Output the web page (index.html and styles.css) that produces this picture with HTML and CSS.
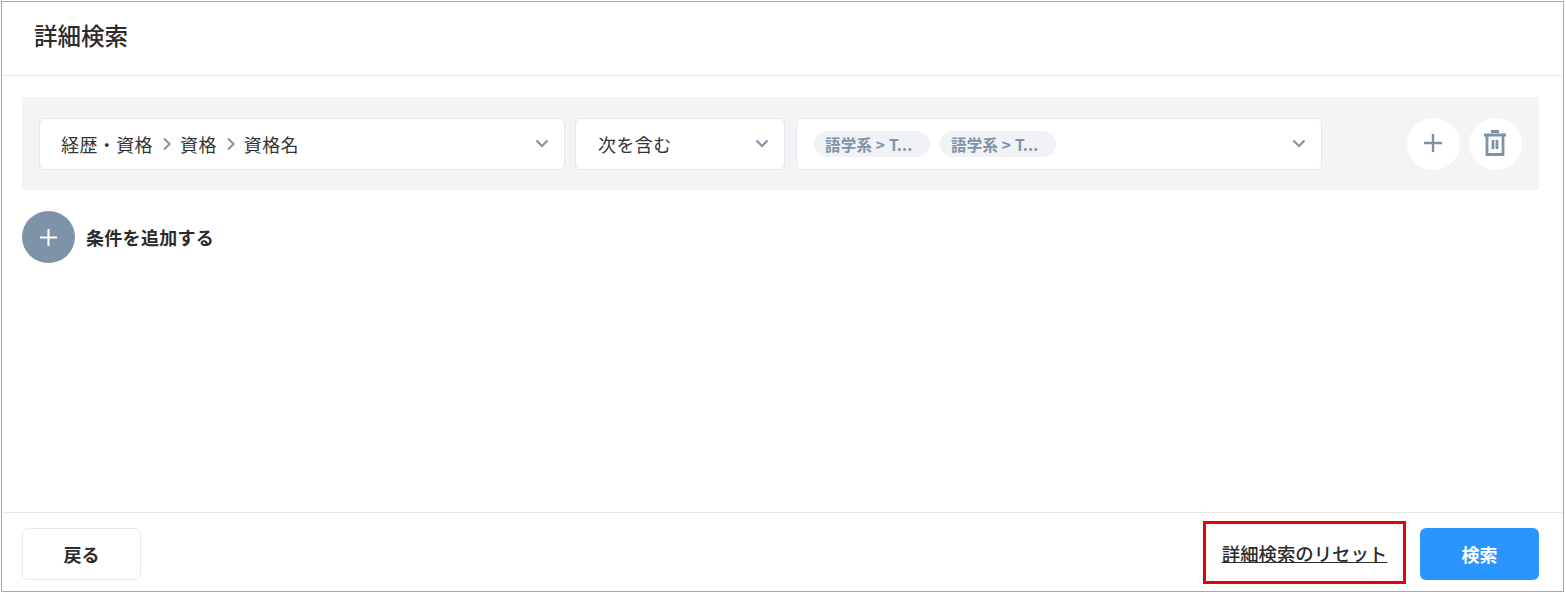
FILE: index.html
```html
<!DOCTYPE html>
<html lang="ja">
<head>
<meta charset="utf-8">
<title>詳細検索</title>
<link rel="stylesheet" href="styles.css">
</head>
<body>
<main class="frame">
  <header class="head"><h1 class="title">詳細検索</h1></header>
  <section class="body">
    <div class="row">
      <div class="select select-field">
        <span class="value">経歴・資格<svg class="sep" viewBox="0 0 10 14"><path d="M2 1.5 7.5 7 2 12.5"/></svg>資格<svg class="sep" viewBox="0 0 10 14"><path d="M2 1.5 7.5 7 2 12.5"/></svg>資格名</span>
        <svg class="chev" viewBox="0 0 14 9"><path d="M1.5 1.5 7 7l5.5-5.5"/></svg>
      </div>
      <div class="select select-op">
        <span class="value">次を含む</span>
        <svg class="chev" viewBox="0 0 14 9"><path d="M1.5 1.5 7 7l5.5-5.5"/></svg>
      </div>
      <div class="select select-val">
        <span class="chips"><span class="chip">語学系 &gt; T...</span><span class="chip">語学系 &gt; T...</span></span>
        <svg class="chev" viewBox="0 0 14 9"><path d="M1.5 1.5 7 7l5.5-5.5"/></svg>
      </div>
      <div class="actions">
        <button class="round" type="button" aria-label="追加"><svg class="ico" viewBox="0 0 20 20"><path d="M10 1v18M1 10h18"/></svg></button>
        <button class="round" type="button" aria-label="削除"><svg class="ico ico-trash" viewBox="0 0 24 26"><path d="M1 5h22M8 1.500h8M4 5v19.500h16V5M10 10v9M14 10v9"/></svg></button>
      </div>
    </div>
    <button class="add" type="button">
      <span class="add-circle"><svg class="add-ico" viewBox="0 0 20 20"><path d="M10 1v18M1 10h18"/></svg></span>
      <span class="add-label">条件を追加する</span>
    </button>
  </section>
  <footer class="foot">
    <button class="btn btn-back" type="button">戻る</button>
    <div class="foot-right">
      <div class="mark"><a class="reset" href="#">詳細検索のリセット</a></div>
      <button class="btn btn-search" type="button">検索</button>
    </div>
  </footer>
</main>
</body>
</html>
```
FILE: styles.css
```css
* { box-sizing: border-box; }
html, body { margin: 0; height: 100%; background: #fff; }
body {
  padding: 1px 2px 2px 1px;
  font-family: "Noto Sans CJK JP", "Noto Sans", sans-serif;
  color: #2b2b2b;
  overflow: hidden;
}
.frame {
  height: 591px;
  border: 1px solid #a9a9a9;
  display: flex;
  flex-direction: column;
  background: #fff;
}
.head {
  height: 74px;
  flex: none;
  padding: 0 32px 6px;
  display: flex;
  align-items: center;
  border-bottom: 1px solid #e8ebee;
}
.title {
  margin: 0;
  font-size: 23.500px;
  line-height: 1;
  font-weight: 500;
}
.body {
  flex: 1;
  padding: 21px 24px 0 20px;
}
.row {
  height: 93px;
  background: #f3f4f6;
  padding: 0 17px 0 17px;
  display: flex;
  align-items: center;
}
.select {
  height: 52px;
  background: #fff;
  border: 1px solid #e4e8ec;
  border-radius: 6px;
  display: flex;
  align-items: center;
  justify-content: space-between;
  padding-right: 15px;
  flex: none;
}
.select-field { width: 526px; padding-left: 21px; }
.select-op { width: 210px; margin-left: 10px; padding-left: 22px; }
.select-val { width: 526px; margin-left: 11px; padding-left: 17px; }
.value {
  display: flex;
  align-items: center;
  font-size: 18px;
  letter-spacing: 0.4px;
  color: #333;
  line-height: 1;
}
.sep {
  width: 10px;
  height: 14px;
  margin: 0 8px 0 9px;
  fill: none;
  stroke: #7f93a8;
  stroke-width: 2;
}
.chev {
  width: 14px;
  height: 9px;
  fill: none;
  stroke: #7f93a8;
  stroke-width: 2.200;
}
.chips { display: flex; gap: 10px; }
.chip {
  width: 116px;
  height: 26px;
  border-radius: 13px;
  background: #f0f2f5;
  color: #7f93a8;
  font-size: 15.500px;
  font-weight: 700;
  letter-spacing: 0.2px;
  line-height: 26px;
  padding-left: 11px;
  white-space: nowrap;
}
.actions {
  margin-left: auto;
  display: flex;
  gap: 9px;
}
.round {
  width: 53px;
  height: 52px;
  border: 0;
  padding: 0 1px 1px 0;
  border-radius: 50%;
  background: #fff;
  display: flex;
  align-items: center;
  justify-content: center;
}
.ico {
  width: 20px;
  height: 20px;
  fill: none;
  stroke: #7f93a8;
  stroke-width: 2.400;
}
.ico-trash { width: 24px; height: 26px; stroke-width: 2.800; }
.add {
  margin-top: 21px;
  padding: 0;
  border: 0;
  background: none;
  display: flex;
  align-items: center;
  gap: 11px;
  font: inherit;
  color: inherit;
}
.add-circle {
  width: 53px;
  height: 52px;
  border-radius: 50%;
  background: #7f93a8;
  display: flex;
  align-items: center;
  justify-content: center;
}
.add-ico {
  width: 19px;
  height: 19px;
  fill: none;
  stroke: #fff;
  stroke-width: 2.200;
}
.add-label {
  font-size: 18px;
  font-weight: 700;
  letter-spacing: 0.3px;
}
.foot {
  height: 79px;
  flex: none;
  border-top: 1px solid #e8ebee;
  padding: 4px 24px 0 20px;
  display: flex;
  align-items: center;
  justify-content: space-between;
}
.foot-right { display: flex; align-items: center; gap: 14px; }
.btn {
  width: 119px;
  height: 52px;
  border-radius: 6px;
  font: inherit;
  font-size: 18px;
  font-weight: 700;
  padding: 0;
}
.btn-back { background: #fff; border: 1px solid #e8ebee; color: #2b2b2b; }
.btn-search { background: #2b95ff; border: 0; color: #fff; }
.mark {
  width: 203px;
  height: 63px;
  margin-bottom: 3px;
  border: 3px solid #e8000b;
  display: flex;
  align-items: center;
  justify-content: center;
}
.reset {
  color: #2b2b2b;
  font-size: 18.400px;
  font-weight: 500;
  text-decoration: underline;
}
```
